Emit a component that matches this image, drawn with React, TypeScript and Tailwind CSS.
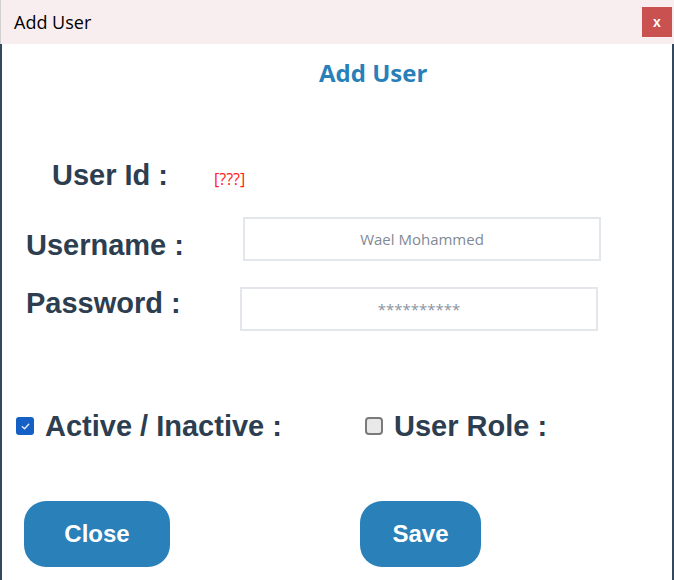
import React from "react";

export default function App() {
  return (
    <div className="w-[674px] h-[580px] bg-white flex flex-col overflow-hidden font-['Liberation_Sans',Arial,sans-serif]">
      <div className="h-[44px] shrink-0 bg-[#f8eeef] border-l border-[#d0d0d0] flex items-center justify-between pl-[13px] pr-[2px]">
        <span className="text-[18px] text-black font-['Open_Sans','Noto_Sans',sans-serif]">Add User</span>
        <div className="w-[30px] h-[30px] bg-[#c9514f] flex items-center justify-center text-white text-[14px] font-bold leading-none">
          x
        </div>
      </div>
      <div className="flex-1 flex flex-col border-l-2 border-r-2 border-[#34495e] bg-white">
        <div className="mt-[14px] h-[30px] leading-[30px] pl-[317px] text-[24px] font-bold text-[#2980b9] font-['Open_Sans','Noto_Sans',sans-serif]">
          Add User
        </div>

        <div className="mt-[71px] flex items-start h-[32px]">
          <div className="w-[212px] pl-[50px] text-[29px] leading-[32px] font-bold text-[#2c3e50]">User Id :</div>
          <div className="mt-[10px] text-[16px] leading-[20px] text-[#ff1a1a] font-['Open_Sans','Noto_Sans',sans-serif]">[???]</div>
        </div>

        <div className="mt-[26px] flex items-start">
          <div className="w-[241px] pl-[24px] mt-[12px] text-[29px] leading-[32px] font-bold text-[#2c3e50]">Username :</div>
          <div className="w-[358px] h-[44px] border-2 border-[#e3e6ea] flex items-center justify-center text-[15px] text-[#7f8a96] font-['Open_Sans','Noto_Sans',sans-serif]">
            Wael Mohammed
          </div>
        </div>

        <div className="mt-[26px] flex items-start">
          <div className="w-[238px] pl-[24px] text-[29px] leading-[32px] font-bold text-[#2c3e50]">Password :</div>
          <div className="w-[358px] h-[44px] border-2 border-[#e3e6ea] flex items-center justify-center text-[15px] text-[#8a949f] font-['Open_Sans','Noto_Sans',sans-serif]">
            **********
          </div>
        </div>

        <div className="mt-[79px] flex items-center h-[32px]">
          <div className="w-[361px] flex items-center pl-[14px]">
            <div className="w-[18px] h-[18px] rounded-[3px] bg-[#1560c4] flex items-center justify-center">
              <svg width="11" height="11" viewBox="0 0 12 12">
                <path d="M2.5 6.2 L5 8.5 L9.5 3.5" fill="none" stroke="#dfe9f7" strokeWidth="1.6" strokeLinecap="round" strokeLinejoin="round" />
              </svg>
            </div>
            <span className="ml-[11px] text-[29px] leading-[32px] font-bold text-[#2c3e50]">Active / Inactive :</span>
          </div>
          <div className="flex items-center pl-[2px]">
            <div className="w-[18px] h-[18px] rounded-[4px] bg-[#e9e9e9] border-2 border-[#7a7a7a]" />
            <span className="ml-[11px] text-[29px] leading-[32px] font-bold text-[#2c3e50]">User Role :</span>
          </div>
        </div>

        <div className="mt-[59px] flex items-start">
          <div className="ml-[22px] w-[146px] h-[66px] rounded-[22px] bg-[#2a80b9] flex items-center justify-center text-white text-[24px] font-bold">
            Close
          </div>
          <div className="ml-[190px] w-[121px] h-[66px] rounded-[22px] bg-[#2a80b9] flex items-center justify-center text-white text-[24px] font-bold">
            Save
          </div>
        </div>
      </div>
    </div>
  );
}
